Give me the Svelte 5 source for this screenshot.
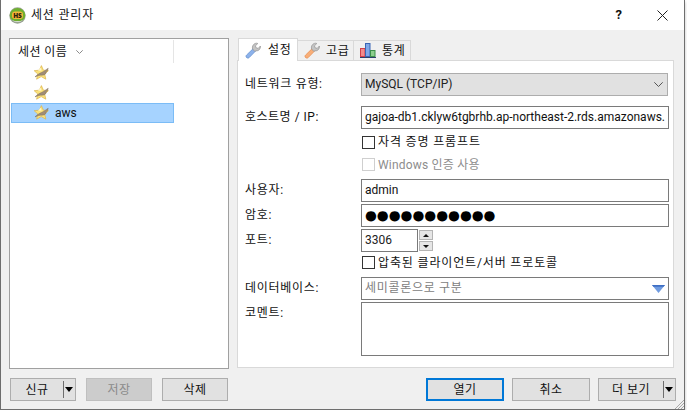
<script>
  const sessions = [{ name: '' }, { name: '' }, { name: 'aws', selected: true }];
  const tabs = [
    { label: '설정', tone: 'blue', active: true },
    { label: '고급', tone: 'orange' },
    { label: '통계', tone: 'chart' }
  ];
  const tones = {
    blue: ['#8db2ea', '#5f8ccf'],
    orange: ['#f8ae78', '#e58a4c']
  };
</script>

{#snippet star()}
  <svg class="star" viewBox="0 0 16 16" width="16" height="16" aria-hidden="true">
    <path d="M8.4 .6 L10.4 5.2 L15.4 5.7 L11.7 9 L12.8 14.2 L8.2 11.6 L3.6 14.2 L4.8 9 L1.2 5.7 L6.4 5.2 Z" fill="#fbe27a" stroke="#dcb54a" stroke-width=".7"/>
    <path d="M7.6 2.6 L8.6 5.6 L5 6 Z" fill="#fff6c8"/>
    <path d="M2 11.8 C4.4 9.6 6.6 8.2 9 7.2 C10.8 6.4 12.6 5 15.2 3.2 C14.8 4.8 14.4 6 13.2 7.2 C13 8.6 12.2 9.6 10.6 10 C8.6 10.4 6.6 10 4.8 10.8 C3.8 11.2 3 11.8 2 11.8 Z" fill="#a08c76" stroke="#75644f" stroke-width=".4"/>
  </svg>
{/snippet}

{#snippet wrench(tone)}
  <svg viewBox="0 0 16 17" width="16" height="17" aria-hidden="true">
    <path d="M1.6 13 L8.2 6.6 L10.6 9 L4.2 15.6 C3.4 16.4 2.2 16.2 1.5 15.5 C.8 14.8 .8 13.8 1.6 13 Z" fill={tones[tone][0]} stroke={tones[tone][1]} stroke-width=".7"/>
    <path d="M7.6 7 C6.8 4.4 8.4 1.4 11.6 1.2 L12.8 1.5 L10.4 3.9 L11.2 5.8 L13.2 6.4 L15.4 4 C15.8 6.6 14 9.2 10.8 8.9 L9.8 9.4 Z" fill="#c4c4c4" stroke="#929292" stroke-width=".7"/>
  </svg>
{/snippet}

{#snippet chart()}
  <svg viewBox="0 0 16 15" width="16" height="15" aria-hidden="true">
    <rect x=".5" y="5.5" width="4.5" height="8" fill="#f28b8b" stroke="#d0404a"/>
    <rect x="5.5" y=".5" width="4.5" height="13" fill="#7fa8e8" stroke="#3a66b5"/>
    <rect x="10.5" y="7.5" width="4.5" height="6" fill="#8ccf8c" stroke="#3c8f4a"/>
    <path d="M0 14.5 H16" stroke="#2c3f6b"/>
  </svg>
{/snippet}

<div class="window">
  <header class="titlebar">
    <svg class="logo" viewBox="0 0 17 17" width="17" height="17" aria-hidden="true">
      <circle cx="8.5" cy="8.5" r="8.2" fill="#9aa394"/>
      <path d="M.8 7.5 A7.8 7.8 0 0 1 16.2 7.5 L16 10 A7.6 5 0 0 1 1 10 Z" fill="#6fb02e"/>
      <path d="M3 13 A7 5 0 0 0 14 13 A7 3.2 0 0 1 3 13 Z" fill="#eef1ea"/>
      <rect x="3" y="4.6" width="11" height="7.4" rx="3" fill="#f4b53a"/>
      <text x="8.5" y="10.6" class="logo-text">HS</text>
    </svg>
    <span class="title">세션 관리자</span>
    <span class="help">?</span>
    <svg class="close" viewBox="0 0 11 11" width="11" height="11" aria-hidden="true">
      <path d="M.5 .5 L10.5 10.5 M10.5 .5 L.5 10.5" stroke="#222" fill="none"/>
    </svg>
  </header>

  <main class="body">
    <section class="list">
      <div class="list-head">
        <span>세션 이름</span>
        <svg viewBox="0 0 7 4" width="7" height="4" aria-hidden="true"><path d="M.3 .3 L3.5 3.5 L6.7 .3" fill="none" stroke="#8a8a8a"/></svg>
      </div>
      {#each sessions as s}
        <div class="session" class:selected={s.selected}>
          {@render star()}
          <span>{s.name}</span>
        </div>
      {/each}
    </section>

    <section class="settings">
      <nav class="tabs">
        {#each tabs as t}
          <div class="tab" class:active={t.active}>
            {#if t.tone === 'chart'}{@render chart()}{:else}{@render wrench(t.tone)}{/if}
            <span>{t.label}</span>
          </div>
        {/each}
      </nav>
      <div class="pane">
        <div class="row combo-row">
          <span class="label">네트워크 유형:</span>
          <div class="field combo">
            <span>MySQL (TCP/IP)</span>
            <svg viewBox="0 0 9 5" width="9" height="5" aria-hidden="true"><path d="M.3 .3 L4.5 4.5 L8.7 .3" fill="none" stroke="#555"/></svg>
          </div>
        </div>
        <div class="row host-row">
          <span class="label">호스트명 / IP:</span>
          <div class="field input clip">gajoa-db1.cklyw6tgbrhb.ap-northeast-2.rds.amazonaws.</div>
        </div>
        <div class="row check-a">
          <span class="box"></span><span class="ctext">자격 증명 프롬프트</span>
        </div>
        <div class="row check-b">
          <span class="box off"></span><span class="ctext off">Windows 인증 사용</span>
        </div>
        <div class="row">
          <span class="label">사용자:</span>
          <div class="field input">admin</div>
        </div>
        <div class="row">
          <span class="label">암호:</span>
          <div class="field input dots">●●●●●●●●●●●</div>
        </div>
        <div class="row port-row">
          <span class="label">포트:</span>
          <div class="field input port">3306</div>
          <div class="spin">
            <span class="spin-btn"><i class="up"></i></span>
            <span class="spin-btn"><i class="down"></i></span>
          </div>
        </div>
        <div class="row check-c">
          <span class="box"></span><span class="ctext">압축된 클라이언트/서버 프로토콜</span>
        </div>
        <div class="row">
          <span class="label">데이터베이스:</span>
          <div class="field input db">
            <span>세미콜론으로 구분</span>
            <svg viewBox="0 0 13 8" width="13" height="8" aria-hidden="true">
              <path d="M0 0 H13 L6.5 8 Z" fill="#6f9be0"/><path d="M0 0 H13 L11.6 1.8 H1.4 Z" fill="#3f6fc4"/>
            </svg>
          </div>
        </div>
        <div class="row comment-row">
          <span class="label">코멘트:</span>
          <div class="field input comment"></div>
        </div>
      </div>
    </section>
  </main>

  <footer class="actions">
    <div class="group left">
      <button class="btn split"><span class="cap">신규</span><i class="sep"></i><i class="caret"></i></button>
      <button class="btn" disabled>저장</button>
      <button class="btn">삭제</button>
    </div>
    <div class="group right">
      <button class="btn primary">열기</button>
      <button class="btn">취소</button>
      <button class="btn split"><span class="cap">더 보기</span><i class="sep"></i><i class="caret"></i></button>
    </div>
  </footer>
  <svg class="grip" viewBox="0 0 10 10" width="10" height="10" aria-hidden="true">
    <path d="M10 1 L1 10 M10 4 L4 10 M10 7 L7 10" stroke="#a8a8a8" fill="none"/>
  </svg>
</div>

<style>
  :global(body) {
    margin: 0;
    background: #fff;
    overflow: hidden;
  }
  .window {
    position: relative;
    box-sizing: border-box;
    width: 685px;
    height: 410px;
    background: #f0f0f0;
    border: 1px solid #6e6e6e;
    border-top: none;
    box-shadow: 0 2px 3px rgba(0, 0, 0, 0.25);
    font: 12px/16px Roboto, "Noto Sans CJK KR", sans-serif;
    color: #111;
    display: flex;
    flex-direction: column;
  }
  .titlebar {
    height: 30px;
    flex: none;
    background: #fff;
    display: flex;
    align-items: center;
    padding-left: 8px;
  }
  .logo { flex: none; }
  .logo-text {
    font: 800 6.5px "Open Sans", sans-serif;
    fill: #2e2208;
    text-anchor: middle;
  }
  .title { margin-left: 5px; letter-spacing: 0.8px; }
  .help {
    margin-left: auto;
    font-weight: 700;
    font-size: 13px;
  }
  .close { margin: 0 16px 0 35px; }
  .body {
    flex: none;
    display: flex;
    gap: 8px;
    padding: 8px 0 0 8px;
  }
  .list {
    box-sizing: border-box;
    width: 220px;
    height: 331px;
    background: #fff;
    border: 1px solid #a0a0a0;
    padding-left: 1px;
  }
  .list-head {
    width: 163px;
    height: 23px;
    box-sizing: border-box;
    border-right: 1px solid #e5e5e5;
    display: flex;
    align-items: center;
    gap: 9px;
    padding-left: 7px;
    margin-top: 1px;
  }
  .list-head span { letter-spacing: 0.4px; }
  .session {
    box-sizing: border-box;
    width: 163px;
    height: 20px;
    display: flex;
    align-items: center;
    gap: 6px;
    padding-left: 21px;
    border: 1px solid transparent;
  }
  .session.selected {
    background: #a6d3ff;
    border-color: #7bbcf6;
  }
  .star { flex: none; }
  .settings { width: 437px; }
  .tabs {
    display: flex;
    align-items: flex-end;
    height: 22px;
    padding-left: 1px;
    position: relative;
    z-index: 1;
  }
  .tab {
    box-sizing: border-box;
    height: 20px;
    background: #f0f0f0;
    border: 1px solid #d9d9d9;
    border-left: none;
    border-bottom: none;
    display: flex;
    align-items: center;
    gap: 6px;
    padding-left: 6px;
    width: 56px;
  }
  .tab span { letter-spacing: 0.6px; }
  .tab.active {
    width: 60px;
    height: 23px;
    margin-bottom: -1px;
    background: #fff;
    border-left: 1px solid #d9d9d9;
    gap: 7px;
  }
  .tab:last-child { width: 57px; }
  .pane {
    box-sizing: border-box;
    height: 308px;
    background: #fff;
    border: 1px solid #d9d9d9;
    padding: 12px 4px 0 7px;
  }
  .row {
    display: flex;
    align-items: flex-start;
    height: 23px;
    margin-bottom: 2px;
  }
  .combo-row { margin-bottom: 10px; }
  .port-row { margin-bottom: 0; }
  .label {
    width: 116px;
    flex: none;
    line-height: 22px;
    letter-spacing: 0.7px;
  }
  .host-row .label { letter-spacing: 0.5px; }
  .field {
    box-sizing: border-box;
    flex: 1;
    height: 23px;
    line-height: 21px;
    padding: 0 3px;
    white-space: nowrap;
    min-width: 0;
  }
  .input {
    background: #fff;
    border: 1px solid #7a7a7a;
  }
  .clip { overflow: hidden; }
  .combo {
    background: #e1e1e1;
    border: 1px solid #adadad;
    display: flex;
    align-items: center;
    justify-content: space-between;
    padding-right: 4px;
    color: #222;
    margin-right: 1px;
  }
  .check-a, .check-b, .check-c {
    align-items: center;
    padding-left: 117px;
    margin-bottom: 0;
  }
  .check-a { height: 22px; }
  .check-b { margin-bottom: 3px; }
  .check-c { height: 21px; margin-bottom: 4px; }
  .box {
    box-sizing: border-box;
    width: 13px;
    height: 13px;
    flex: none;
    background: #fff;
    border: 1px solid #333;
  }
  .box.off { border-color: #cfcfcf; }
  .ctext { margin-left: 3px; letter-spacing: 0.85px; }
  .ctext.off { color: #8d8d8d; letter-spacing: 0.2px; }
  .dots {
    font-family: "DejaVu Sans", sans-serif;
    font-size: 13.6px;
    line-height: 20px;
    color: #000;
    letter-spacing: 0;
  }
  .port {
    flex: none;
    width: 57px;
    margin-right: 1px;
    color: #222;
  }
  .spin {
    display: flex;
    flex-direction: column;
    gap: 1px;
    padding-top: 1px;
  }
  .spin-btn {
    box-sizing: border-box;
    width: 14px;
    height: 10px;
    background: #e6e6e6;
    border: 1px solid #b4b4b4;
    display: flex;
    align-items: center;
    justify-content: center;
  }
  .spin-btn i {
    width: 0;
    height: 0;
    border-left: 3px solid transparent;
    border-right: 3px solid transparent;
  }
  .spin-btn .up { border-bottom: 3px solid #111; }
  .spin-btn .down { border-top: 3px solid #111; }
  .db {
    display: flex;
    align-items: center;
    justify-content: space-between;
    padding-right: 3px;
    color: #7d7d7d;
    letter-spacing: 0.7px;
  }
  .comment-row { height: 54px; margin-bottom: 0; }
  .comment { height: 54px; }
  .actions {
    flex: none;
    display: flex;
    justify-content: space-between;
    padding: 9px 8px 0 9px;
  }
  .group { display: flex; }
  .group.left { gap: 10px; }
  .group.right { gap: 8px; }
  .btn {
    box-sizing: border-box;
    width: 66px;
    height: 23px;
    margin: 0;
    padding: 0;
    background: #e1e1e1;
    border: 1px solid #adadad;
    border-radius: 0;
    font: inherit;
    letter-spacing: 0.5px;
    color: #111;
    position: relative;
  }
  .group.right .btn { width: 78px; }
  .btn:disabled {
    background: #cccccc;
    border-color: #bfbfbf;
    color: #8a8a8a;
  }
  .btn.primary {
    border: 2px solid #0078d7;
  }
  .split {
    display: flex;
    align-items: center;
  }
  .cap {
    flex: 1;
    text-align: center;
  }
  .sep {
    width: 1px;
    height: 17px;
    background: #6d6d6d;
    flex: none;
    margin-right: 1px;
  }
  .caret {
    width: 0;
    height: 0;
    flex: none;
    margin-right: 2px;
    border-left: 4.5px solid transparent;
    border-right: 4.5px solid transparent;
    border-top: 5px solid #000;
  }
  .grip {
    position: absolute;
    right: 0;
    bottom: 0;
  }
</style>
